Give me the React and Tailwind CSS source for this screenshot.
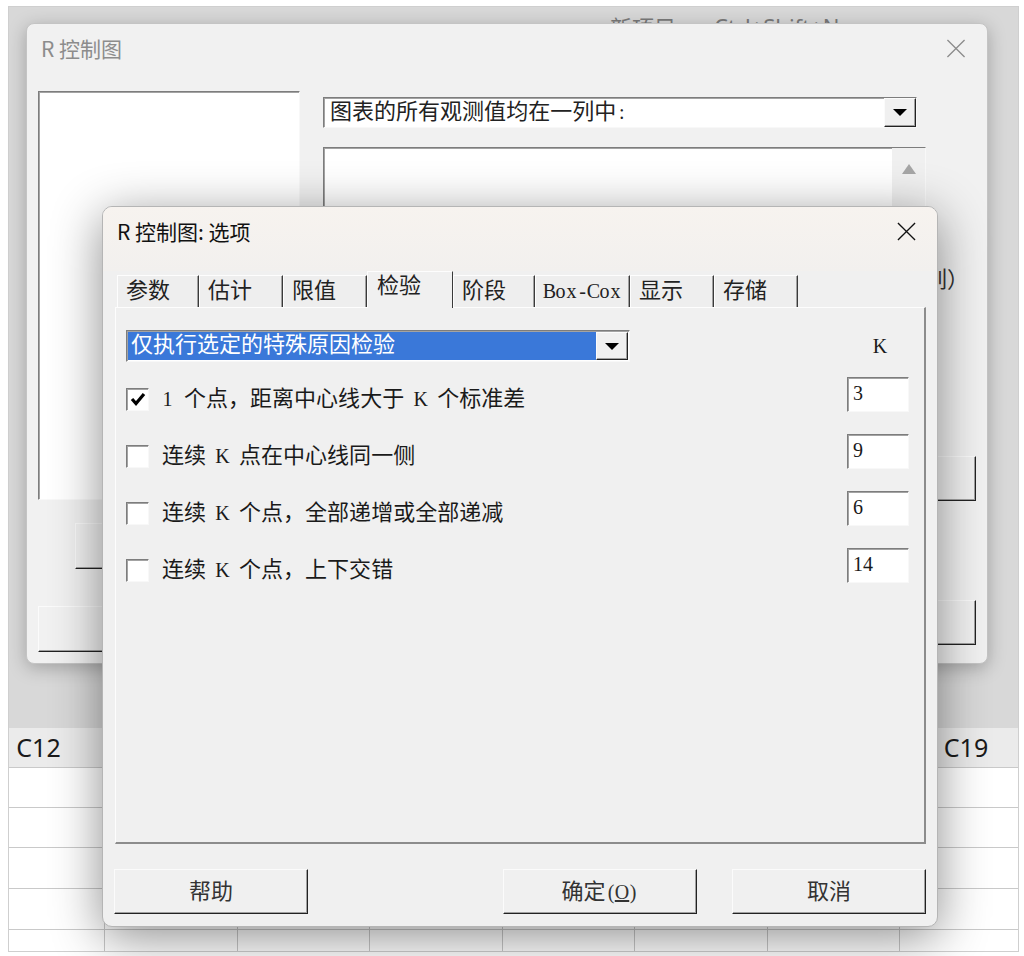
import React from 'react'

const serif = "font-['Liberation_Serif','Noto_Sans_CJK_SC',serif]"
const ui = "font-['Noto_Sans_CJK_SC',sans-serif]"
const sunken =
  'border border-t-[#7d7d7d] border-l-[#7d7d7d] border-r-[#f8f8f8] border-b-[#f8f8f8] shadow-[inset_1px_1px_0_#a3a3a3]'
const raised =
  'border border-t-[#fbfbfb] border-l-[#fbfbfb] border-r-[#222] border-b-[#222] shadow-[inset_-1px_-1px_0_#a0a0a0]'

// SimSun-like text: ASCII chars take a half-width cell
function Mixed({ text }) {
  return [...text].map((ch, i) =>
    ch.charCodeAt(0) < 128 ? (
      <span key={i} className="inline-flex w-[11px] justify-center text-[20px]">
        {ch === ' ' ? '\u00a0' : ch}
      </span>
    ) : (
      <span key={i}>{ch}</span>
    )
  )
}

function CloseIcon({ className }) {
  return (
    <svg viewBox="0 0 20 20" className={className} fill="none" stroke="currentColor" strokeWidth="1.4">
      <path d="M1 1L19 19M19 1L1 19" />
    </svg>
  )
}

function DownArrow() {
  return (
    <svg width="14" height="7" viewBox="0 0 14 7">
      <polygon points="0,0 14,0 7,7" fill="#000" />
    </svg>
  )
}

const tabs = [
  { label: '参数', w: 'w-[82px]' },
  { label: '估计', w: 'w-[84px]' },
  { label: '限值', w: 'w-[84px]' },
  { label: '检验', w: 'w-[86px]', active: true },
  { label: '阶段', w: 'w-[82px]' },
  { label: 'Box-Cox', w: 'w-[95px]' },
  { label: '显示', w: 'w-[84px]' },
  { label: '存储', w: 'w-[84px]' },
]

const tests = [
  { label: '1 个点，距离中心线大于 K 个标准差', k: '3', on: true },
  { label: '连续 K 点在中心线同一侧', k: '9' },
  { label: '连续 K 个点，全部递增或全部递减', k: '6' },
  { label: '连续 K 个点，上下交错', k: '14' },
]

const cols = ['C12', 'C13', 'C14', 'C15', 'C16', 'C17', 'C18', 'C19']
const rows = ['h-[40px]', 'h-[40px]', 'h-[41px]', 'h-[41px]', 'h-[41px]']

function Worksheet() {
  return (
    <div className="h-[223px] overflow-hidden bg-white">
      <div className="ml-[-36px] flex h-[40px] border-b border-[#c9c9c9] bg-[#ebebeb]">
        {cols.map((c, i) => (
          <div
            key={c}
            className={`${i % 2 ? 'w-[133px]' : 'w-[132px]'} flex shrink-0 items-center justify-center border-r border-[#c9c9c9] font-['Noto_Sans',sans-serif] text-[25px] text-[#1a1a1a]`}
          >
            {c}
          </div>
        ))}
      </div>
      {rows.map((h, r) => (
        <div key={r} className={`ml-[-36px] flex ${h} border-b border-[#c9c9c9]`}>
          {cols.map((c, i) => (
            <div key={c} className={`${i % 2 ? 'w-[133px]' : 'w-[132px]'} shrink-0 border-r border-[#c9c9c9]`} />
          ))}
        </div>
      ))}
    </div>
  )
}

function BackDialog() {
  return (
    <div className="absolute left-[26px] top-[23px] flex h-[641px] w-[962px] flex-col rounded-[8px] border border-[#c4c4c4] bg-[#f1f1f1] shadow-[0_4px_18px_rgba(0,0,0,0.25)]">
      <div className="flex h-[54px] items-center justify-between pb-[5px] pl-[14px] pr-[21px]">
        <span className={`${ui} text-[21px] leading-none text-[#8c8c8c]`}>R 控制图</span>
        <CloseIcon className="h-[19px] w-[20px] text-[#8c8c8c]" />
      </div>
      <div className="flex pl-[11px] pt-[13px]">
        {/* variables list + lower buttons */}
        <div className="flex w-[262px] flex-col">
          <div className={`h-[409px] ${sunken} bg-white`} />
          <div className={`ml-[37px] mt-[23px] h-[46px] w-[200px] ${raised}`} />
          <div className={`mt-[37px] h-[46px] w-[262px] ${raised}`} />
        </div>
        <div className="ml-[23px] flex w-[653px] flex-col">
          <div className={`mt-[6px] flex h-[31px] w-[594px] ${sunken} bg-white`}>
            <span className={`${serif} flex-1 pl-[6px] pt-[3px] text-[22px] leading-none text-[#222]`}>
              <Mixed text="图表的所有观测值均在一列中:" />
            </span>
            <div className={`flex w-[32px] items-center justify-center bg-[#f0f0f0] ${raised}`}>
              <DownArrow />
            </div>
          </div>
          <div className={`mt-[19px] flex h-[110px] w-[603px] ${sunken} bg-white`}>
            <div className="flex-1" />
            <div className="flex w-[33px] justify-center bg-[#f0f0f0] pt-[16px]">
              <svg width="14" height="10" viewBox="0 0 14 10">
                <polygon points="7,0 14,10 0,10" fill="#a6a6a6" />
              </svg>
            </div>
          </div>
          <div className={`${ui} mt-[9px] pl-[602px] text-[22px] leading-none text-[#333]`}>列）</div>
          <div className={`ml-[497px] mt-[168px] h-[45px] w-[156px] ${raised}`} />
          <div className={`ml-[497px] mt-[99px] h-[45px] w-[156px] ${raised}`} />
        </div>
      </div>
    </div>
  )
}

function OptionsDialog() {
  return (
    <div className="absolute left-[102px] top-[206px] flex w-[836px] flex-col overflow-hidden rounded-[10px] border border-[#b5b5b5] bg-[#f0f0f0] shadow-[0_10px_50px_rgba(0,0,0,0.45)]">
      {/* title bar */}
      <div className="flex h-[64px] flex-col bg-gradient-to-b from-[#f7f3ef] to-[#f2f0ee]">
        <div className="flex h-[54px] items-center justify-between pb-[5px] pl-[14px] pr-[21px]">
          <span className={`${ui} text-[21px] leading-none text-[#111]`}>R 控制图: 选项</span>
          <CloseIcon className="h-[19px] w-[19px] text-[#111]" />
        </div>
      </div>

      {/* tabs */}
      <div className={`${serif} mt-[-58px] box-content flex h-[36px] items-end pl-[14px] pt-[58px]`}>
        {tabs.map((t) =>
          t.active ? (
            <div
              key={t.label}
              className={`${t.w} relative z-10 mb-[-1px] h-[37px] border-l border-r border-t border-l-[#fdfdfd] border-r-[#3a3a3a] border-t-[#fdfdfd] bg-[#f0f0f0] pl-[9px] pt-[3px] text-[22px] leading-none text-[#222]`}
            >
              <Mixed text={t.label} />
            </div>
          ) : (
            <div
              key={t.label}
              className={`${t.w} h-[32px] border-l border-r border-t border-l-[#fdfdfd] border-r-[#3a3a3a] border-t-[#fdfdfd] bg-[#eeeeee] pl-[8px] pt-[4px] text-[22px] leading-none text-[#222] shadow-[inset_-1px_0_0_#a0a0a0]`}
            >
              <Mixed text={t.label} />
            </div>
          )
        )}
      </div>

      {/* tab panel */}
      <div className="ml-[12px] h-[537px] w-[811px] border-b-2 border-l border-r-2 border-t border-b-[#8c8c8c] border-l-[#fdfdfd] border-r-[#8c8c8c] border-t-[#fdfdfd]">
        <div className={`${serif} flex flex-col pl-[10px] pr-[15px] pt-[22px] text-[#1a1a1a]`}>
          <div className="flex items-center">
            <div className={`flex h-[32px] w-[504px] ${sunken} bg-white p-[1px]`}>
              <div className="flex flex-1 items-center bg-[#3a78d9] pb-[2px] pl-[3px] text-[22px] leading-none text-white">
                仅执行选定的特殊原因检验
              </div>
              <div className={`flex w-[32px] items-center justify-center bg-[#f0f0f0] ${raised}`}>
                <DownArrow />
              </div>
            </div>
            <div className="ml-auto w-[62px] pl-[4px] text-center text-[20px] leading-none">K</div>
          </div>

          <div className="mt-[15px] flex flex-col">
            {tests.map((t) => (
              <div key={t.k} className="flex h-[57px] items-start">
                <div className={`mt-[11px] flex h-[23px] w-[23px] shrink-0 items-center justify-center ${sunken} bg-white`}>
                  {t.on && (
                    <svg width="16" height="15" viewBox="0 0 16 15">
                      <polyline points="2,7 6,11.5 14,2" fill="none" stroke="#000" strokeWidth="3.2" />
                    </svg>
                  )}
                </div>
                <div className="ml-[13px] mt-[10px] text-[22px] leading-[23px]">
                  <Mixed text={t.label} />
                </div>
                <div className={`ml-auto h-[35px] w-[62px] ${sunken} bg-white pl-[5px] pt-[5px] text-[20px] leading-none`}>
                  {t.k}
                </div>
              </div>
            ))}
          </div>
        </div>
      </div>

      {/* buttons */}
      <div className={`${serif} mb-[12px] mt-[25px] flex pl-[11px] text-[22px] text-[#333]`}>
        <div className={`flex h-[45px] w-[194px] items-center justify-center ${raised}`}>帮助</div>
        <div className={`ml-[195px] flex h-[45px] w-[194px] items-center justify-center ${raised}`}>
          确定<Mixed text="(" />
          <span className="inline-flex w-[11px] justify-center text-[20px] underline">O</span>
          <Mixed text=")" />
        </div>
        <div className={`ml-[35px] flex h-[45px] w-[194px] items-center justify-center ${raised}`}>取消</div>
      </div>
    </div>
  )
}

export default function App() {
  return (
    <div className="relative h-[956px] w-[1024px] overflow-hidden bg-white pl-[8px] pt-[6px]">
      {/* application window behind the dialogs */}
      <div className="flex h-[946px] w-[1011px] flex-col border border-[#cfcfcf] bg-[#d8d8d8]">
        <div className="flex-1 overflow-hidden">
          <div className={`${ui} flex gap-[38px] pl-[601px] pt-[8px] text-[22px] leading-none text-[#7a7a7a]`}>
            <span>新项目</span>
            <span className="font-['Noto_Sans',sans-serif]">Ctrl+Shift+N</span>
          </div>
        </div>
        <Worksheet />
      </div>

      <BackDialog />
      <OptionsDialog />
    </div>
  )
}
